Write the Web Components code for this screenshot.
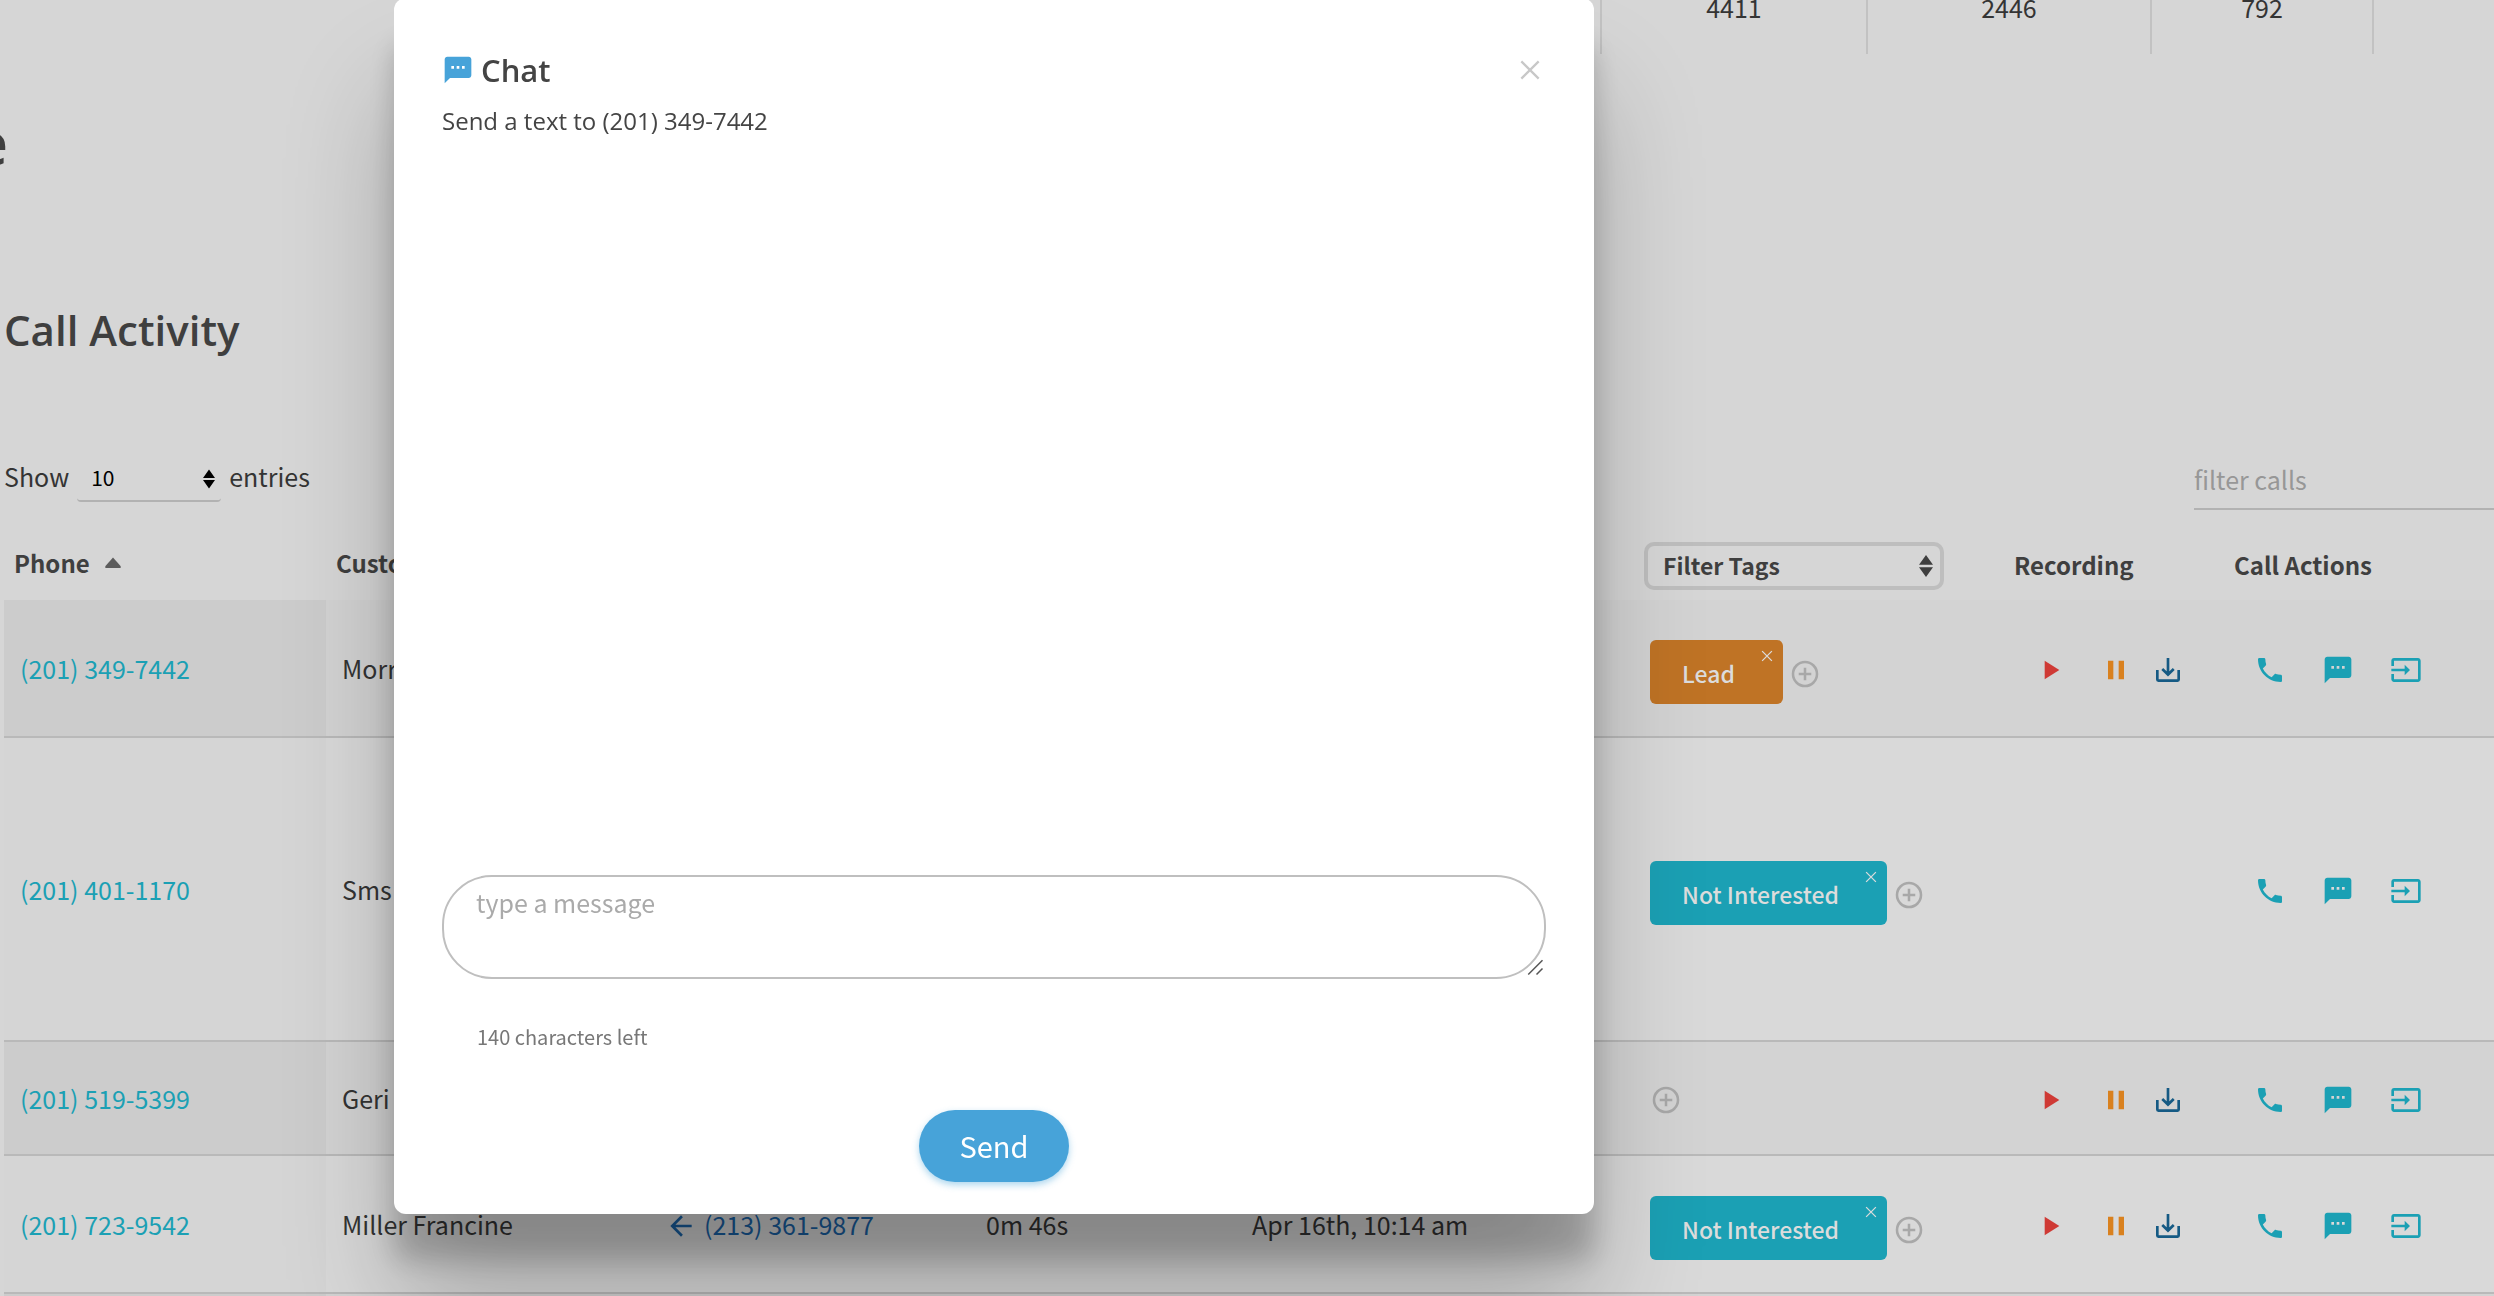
<!DOCTYPE html>
<html lang="en">
<head>
<meta charset="utf-8">
<title>Call Activity</title>
<style>
  :root {
    --sans: "Noto Sans CJK SC", sans-serif;
    --head: "Open Sans", sans-serif;
    --page: #d6d6d6;
    --ink: #343434;
    --strong: #3f3f3f;
    --line: #b9b9b9;
    --teal: #1ba0b4;
    --blue: #47a3d9;
  }
  html { height: 100%; }
  body {
    margin: 0;
    height: 100%;
    overflow: hidden;
    background: var(--page);
    color: var(--ink);
    font: 25px/36px var(--sans);
  }
</style>
</head>
<body>
<call-page></call-page>
<chat-dialog phone="(201) 349-7442"></chat-dialog>

<script>
const ICONS = {
  sms: '<path d="M20 2H4c-1.1 0-1.99.9-1.99 2L2 22l4-4h14c1.1 0 2-.9 2-2V4c0-1.1-.9-2-2-2zM9 11H7V9h2v2zm4 0h-2V9h2v2zm4 0h-2V9h2v2z"/>',
  phone: '<path d="M6.62 10.79c1.44 2.83 3.76 5.14 6.59 6.59l2.2-2.2c.27-.27.67-.36 1.02-.24 1.12.37 2.33.57 3.57.57.55 0 1 .45 1 1V20c0 .55-.45 1-1 1-9.39 0-17-7.61-17-17 0-.55.45-1 1-1h3.5c.55 0 1 .45 1 1 0 1.25.2 2.45.57 3.57.11.35.03.74-.25 1.02l-2.2 2.2z"/>',
  input: '<path d="M21 3.01H3c-1.1 0-2 .9-2 2V9h2V4.99h18v14.03H3V15H1v4.01c0 1.1.9 1.98 2 1.98h18c1.1 0 2-.88 2-1.98v-14c0-1.11-.9-2-2-2zM11 16l4-4-4-4v3H1v2h10v3z"/>',
  play: '<path d="M8 5v14l11-7z"/>',
  pause: '<path d="M6 19h4V5H6v14zm8-14v14h4V5h-4z"/>',
  back: '<path d="M20 11H7.83l5.59-5.59L12 4l-8 8 8 8 1.41-1.41L7.83 13H20v-2z"/>',
  download: '<path d="M4 12v7.200a.8.8 0 0 0 .8.8h14.400a.8.8 0 0 0 .8-.8V12M12 3v12M7.700 11.200l4.300 4.200 4.300-4.200" fill="none" stroke="currentColor" stroke-width="2"/>',
  plus: '<g fill="none" stroke="currentColor" stroke-width="1.900"><circle cx="12" cy="12" r="9"/><path d="M12 7.300v9.400M7.300 12h9.400"/></g>',
  close: '<path d="M5.500 5.500l13 13M18.500 5.500l-13 13" fill="none" stroke="currentColor" stroke-width="1.700"/>',
  updown: '<path d="M12 2.500l6 8.500H6zM12 21.500L6 13h12z"/>',
  up: '<path d="M12 6.500l7.500 8.500q1 2-1 2H5.500q-2 0-1-2z"/>',
  grip: '<path d="M3 22L22 3M14 22l8-8" fill="none" stroke="currentColor" stroke-width="2"/>'
};

function define(name, css, markup, setup) {
  const template = document.createElement('template');
  template.innerHTML = `<style>:host,*{box-sizing:border-box}${css}</style>${markup}`;
  customElements.define(name, class extends HTMLElement {
    connectedCallback() {
      if (this.shadowRoot) return;
      const root = this.attachShadow({ mode: 'open' });
      root.append(template.content.cloneNode(true));
      if (setup) setup(this, root);
    }
  });
}

define('ui-icon', `
  :host { display: inline-block; flex: none; width: var(--size, 32px); height: var(--size, 32px); }
  svg { display: block; width: 100%; height: 100%; fill: currentColor; }
`, '<svg viewBox="0 0 24 24" aria-hidden="true"></svg>', (host, root) => {
  root.querySelector('svg').innerHTML = ICONS[host.getAttribute('name')];
});

define('icon-button', `
  :host { display: inline-flex; flex: none; }
  button { display: flex; padding: 0; border: 0; background: none; color: inherit; cursor: pointer; }
`, '<button type="button"></button>', (host, root) => {
  const button = root.querySelector('button');
  button.setAttribute('aria-label', host.getAttribute('label'));
  const icon = document.createElement('ui-icon');
  icon.setAttribute('name', host.getAttribute('icon'));
  button.append(icon);
});

define('call-tag', `
  :host { display: inline-flex; position: relative; align-items: center; height: 64px; padding: 2px 48px 0 32px;
          border-radius: 6px; background: var(--tag, var(--teal)); color: #dcdcdc; font-weight: 500; font-size: 23px; white-space: nowrap; }
  icon-button { position: absolute; top: 7px; right: 7px; --size: 18px; }
`, '<slot></slot><icon-button icon="close" label="Remove tag"></icon-button>');

define('stats-strip', `
  :host { display: grid; grid-template-columns: 1fr 266px 284px 222px 120px; height: 54px; line-height: 14px; text-align: center; }
  div { border-right: 2px solid #c2c2c2; }
  div:last-child { border: 0; }
`, '<div></div><div>4411</div><div>2446</div><div>792</div><div></div>');

define('table-controls', `
  :host { display: flex; justify-content: space-between; align-items: flex-start; }
  .length, .pick { display: flex; align-items: center; }
  .length { gap: 8px; }
  .pick { position: relative; }
  select, input { appearance: none; border: 0; border-bottom: 2px solid #b2b2b2; background: none; font: inherit; outline: 0; border-radius: 0; }
  select { width: 144px; height: 52px; padding: 4px 14px 0; border-radius: 4px; font-size: 21px; color: #000; }
  .pick ui-icon { position: absolute; right: 0; top: 17px; --size: 24px; color: #000; pointer-events: none; }
  .search { width: 300px; }
  input { display: block; width: 100%; height: 60px; padding: 0; color: var(--ink); }
  input::placeholder { color: #979797; opacity: 1; }
`, `<div class="length"><label for="len">Show</label>
    <span class="pick"><select id="len"><option>10</option></select><ui-icon name="updown"></ui-icon></span>
    <span>entries</span></div>
  <div class="search"><input type="search" aria-label="filter calls" placeholder="filter calls"></div>`);

const CALLS = [
  { phone: '(201) 349-7442', name: 'Morris', tag: 'Lead', color: '#bf7325', rec: true, height: 138 },
  { phone: '(201) 401-1170', name: 'Sms', tag: 'Not Interested', height: 304 },
  { phone: '(201) 519-5399', name: 'Geri', rec: true, height: 114 },
  { phone: '(201) 723-9542', name: 'Miller Francine', from: '(213) 361-9877', length: '0m 46s', date: 'Apr 16th, 10:14 am',
    tag: 'Not Interested', rec: true, height: 138 },
  { height: 114, blank: true }
];

define('calls-table', `
  :host { display: block; }
  table { width: 100%; table-layout: fixed; border-collapse: separate; border-spacing: 0; }
  th, td { padding: 0 16px; text-align: left; white-space: nowrap; vertical-align: middle; }
  th { height: 68px; padding: 0 10px; font-size: 24px; font-weight: 700; color: var(--strong); }
  th.plain { padding-bottom: 2px; }
  th.sort { padding-bottom: 6px; }
  .label { display: flex; align-items: center; gap: 11px; }
  .label ui-icon { --size: 24px; color: #5c5c5c; }
  td { border-bottom: 2px solid var(--line); background: #d9d9d9; }
  td:first-child { background: #d5d5d5; }
  tr:nth-child(odd) td { background: #d3d3d3; }
  tr:nth-child(odd) td:first-child { background: #ccc; }
  a { color: var(--teal); text-decoration: none; }
  a.from { display: flex; align-items: center; gap: 7px; margin-left: -6px; color: #1a62a5; }
  a.from ui-icon { margin-top: 3px; }
  .tags, .rec, .act { display: flex; align-items: center; }
  .tags { gap: 6px; padding-top: 8px; }
  .tags > icon-button { color: #a8a8a8; padding-top: 4px; }
  .bare { padding-top: 0; }
  .rec { gap: 20px; padding-left: 14px; padding-top: 4px; }
  .rec :first-child { margin-right: 14px; color: #cf3a35; }
  .rec :nth-child(2) { color: #d9811f; }
  .rec :last-child { color: #155a84; }
  .act { gap: 36px; padding-left: 14px; padding-top: 4px; color: var(--teal); }
  .filter { display: flex; align-items: center; position: relative; width: 300px; }
  select { appearance: none; width: 100%; height: 48px; padding: 0 15px 2px; border: 4px solid #bebebe; border-radius: 10px;
           background: none; font: inherit; font-size: 23px; color: inherit; }
  .filter ui-icon { position: absolute; right: 4px; --size: 28px; pointer-events: none; }
`, `<table>
  <colgroup><col style="width:322px"><col style="width:329px"><col style="width:315px"><col style="width:266px"><col style="width:398px"><col style="width:370px"><col style="width:220px"><col></colgroup>
  <thead><tr>
    <th class="sort"><span class="label">Phone<ui-icon name="up"></ui-icon></span></th><th class="sort">Customer</th><th></th><th></th><th></th>
    <th><div class="filter"><select aria-label="Filter Tags"><option>Filter Tags</option></select><ui-icon name="updown"></ui-icon></div></th>
    <th class="plain">Recording</th><th class="plain">Call Actions</th>
  </tr></thead><tbody></tbody></table>`, (host, root) => {
  const body = root.querySelector('tbody');
  body.innerHTML = CALLS.map(c => c.blank
    ? `<tr style="height:${c.height}px">${'<td></td>'.repeat(8)}</tr>`
    : `<tr style="height:${c.height}px">
      <td><a href="#">${c.phone}</a></td>
      <td>${c.name}</td>
      <td>${c.from ? `<a class="from" href="#"><ui-icon name="back"></ui-icon>${c.from}</a>` : ''}</td>
      <td>${c.length || ''}</td>
      <td>${c.date || ''}</td>
      <td><div class="tags${c.tag ? '' : ' bare'}">${c.tag ? `<call-tag style="--tag:${c.color || 'var(--teal)'}">${c.tag}</call-tag>` : ''}<icon-button icon="plus" label="Add tag"></icon-button></div></td>
      <td>${c.rec ? '<div class="rec"><icon-button icon="play" label="Play"></icon-button><icon-button icon="pause" label="Pause"></icon-button><icon-button icon="download" label="Download"></icon-button></div>' : ''}</td>
      <td><div class="act"><icon-button icon="phone" label="Call"></icon-button><icon-button icon="sms" label="Text"></icon-button><icon-button icon="input" label="Open"></icon-button></div></td>
    </tr>`).join('');
});

define('call-page', `
  :host { display: block; height: 100%; overflow: hidden; }
  h1, h2 { margin: 0; font-family: var(--head); color: var(--strong); }
  h1 { display: flex; justify-content: flex-end; width: 8px; overflow: hidden; margin-top: 48px; font-size: 60px; line-height: 80px; font-weight: 600; }
  h2 { margin-top: 114px; padding-left: 4px; font-size: 42px; line-height: 68px; font-weight: 600; }
  table-controls { margin: 86px 0 22px; padding-left: 4px; }
  calls-table { margin-left: 4px; }
`, `<stats-strip></stats-strip><h1>e</h1><h2>Call Activity</h2><table-controls></table-controls><calls-table></calls-table>`);

define('chat-dialog', `
  :host { position: fixed; top: -2px; left: 394px; width: 1200px; display: flex; flex-direction: column; padding: 49px 48px 32px;
          border-radius: 12px; background: #fff; color: #444;
          box-shadow: 0 96px 112px rgba(0,0,0,.23), 0 46px 28px rgba(0,0,0,.2); }
  header { display: flex; align-items: center; justify-content: space-between; height: 46px; }
  h3 { display: flex; align-items: center; gap: 7px; margin: 0; font: 600 31px/46px var(--head); }
  h3 ui-icon { color: var(--blue); }
  header icon-button { color: #c8c8c8; }
  p { margin: 10px 0 0; font: 24px/36px var(--head); }
  .log { min-height: 736px; }
  .field { position: relative; }
  textarea { display: block; width: 100%; height: 104px; padding: 7px 32px; border: 2px solid #bfbfbf; border-radius: 50px; outline: 0;
             resize: none; overflow: hidden; background: none; font: inherit; color: inherit; }
  textarea::placeholder { color: #aaa; opacity: 1; }
  .field ui-icon { position: absolute; right: 2px; bottom: 3px; --size: 18px; color: #555; }
  .count { margin: 40px 0 0 35px; font: 20px/36px var(--sans); color: #777; }
  .send { align-self: center; width: 150px; height: 72px; margin-top: 55px; padding: 0 0 2px; border: 0; border-radius: 36px; background: var(--blue);
          color: #fff; font: 29px/40px var(--sans); box-shadow: 0 3px 7px rgba(71,163,217,.45); }
`, `<header><h3><ui-icon name="sms"></ui-icon>Chat</h3><icon-button icon="close" label="Close"></icon-button></header>
  <p>Send a text to <span id="to"></span></p>
  <div class="log"></div>
  <div class="field"><textarea aria-label="type a message" placeholder="type a message"></textarea><ui-icon name="grip"></ui-icon></div>
  <div class="count">140 characters left</div>
  <button class="send" type="button">Send</button>`, (host, root) => {
  root.querySelector('#to').textContent = host.getAttribute('phone');
});
</script>
</body>
</html>
